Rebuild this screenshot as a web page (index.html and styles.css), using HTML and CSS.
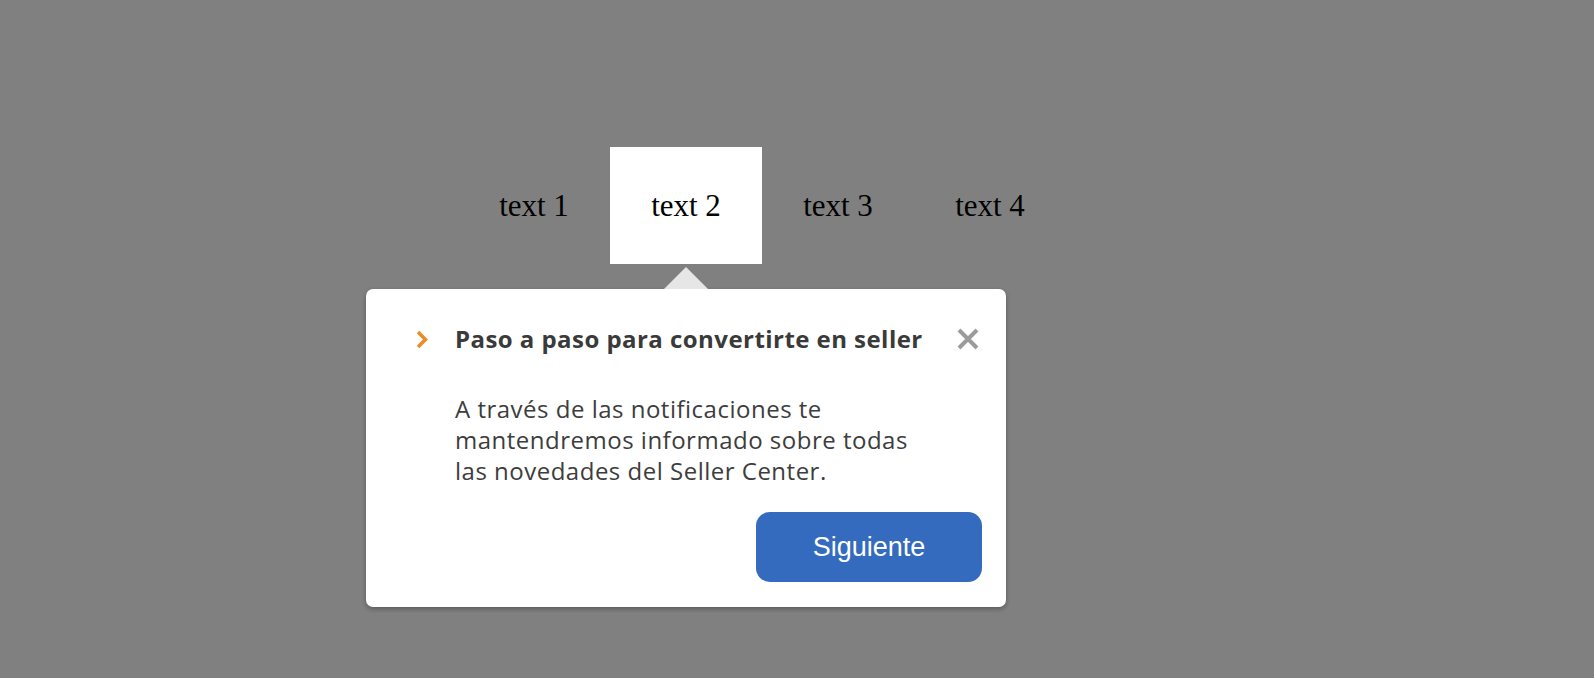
FILE: index.html
```html
<!DOCTYPE html>
<html lang="es">
<head>
<meta charset="utf-8">
<title>Tour</title>
<link rel="stylesheet" href="styles.css">
</head>
<body>
<div class="page">
  <nav class="tabs">
    <div class="tab">text 1</div>
    <div class="tab active">text 2
      <div class="popover">
        <div class="pop-header">
          <svg class="chev" width="12" height="19" viewBox="0 0 12 19" aria-hidden="true">
            <polyline points="2,2 9.5,9.5 2,17" fill="none" stroke="#f08a24" stroke-width="3.5"/>
          </svg>
          <div class="pop-title">Paso a paso para convertirte en seller</div>
          <svg class="close" width="22" height="22" viewBox="0 0 22 22" aria-hidden="true">
            <path d="M2 2 L20 20 M20 2 L2 20" stroke="#9b9b9b" stroke-width="4" fill="none"/>
          </svg>
        </div>
        <p class="pop-body">A través de las notificaciones te mantendremos informado sobre todas las novedades del Seller Center.</p>
        <div class="pop-footer">
          <button class="btn">Siguiente</button>
        </div>
      </div>
    </div>
    <div class="tab">text 3</div>
    <div class="tab">text 4</div>
  </nav>
</div>
</body>
</html>
```
FILE: styles.css
```css
html, body {
  margin: 0;
  padding: 0;
  height: 100%;
}
body {
  background: #808080;
  font-family: "Liberation Serif", "Times New Roman", serif;
}
.page {
  padding: 147px 0 0 458px;
}
.tabs {
  display: flex;
}
.tab {
  position: relative;
  width: 152px;
  height: 117px;
  display: flex;
  align-items: center;
  justify-content: center;
  font-size: 31px;
  color: #000;
}
.tab.active {
  background: #fff;
}
.popover {
  position: absolute;
  top: 100%;
  left: 50%;
  margin-top: 25px;
  transform: translateX(-50%);
  width: 640px;
  box-sizing: border-box;
  padding: 35px 24px 25px 50px;
  background: #fff;
  border-radius: 7px;
  box-shadow: 0 2px 5px rgba(0, 0, 0, 0.3);
  font-family: "Open Sans", "Noto Sans", sans-serif;
  text-align: left;
}
.popover::before {
  content: "";
  position: absolute;
  top: -22px;
  left: 50%;
  margin-left: -22px;
  border-left: 22px solid transparent;
  border-right: 22px solid transparent;
  border-bottom: 22px solid #e6e6e6;
}
.pop-header {
  display: flex;
  align-items: center;
  height: 30px;
}
.chev {
  flex: none;
  margin-right: 27px;
}
.pop-title {
  flex: 1;
  font-size: 24px;
  line-height: 30px;
  letter-spacing: 0.45px;
  font-weight: 700;
  color: #3a3a3a;
  white-space: nowrap;
}
.close {
  flex: none;
  margin-right: 3px;
}
.pop-body {
  margin: 39px 0 0 39px;
  width: 470px;
  font-size: 24px;
  line-height: 31px;
  letter-spacing: 0.5px;
  color: #3d3d3d;
}
.pop-footer {
  display: flex;
  justify-content: flex-end;
  margin-top: 26px;
}
.btn {
  width: 226px;
  height: 70px;
  border: none;
  border-radius: 14px;
  background: #346bbf;
  color: #fff;
  font-family: "Liberation Sans", Arial, sans-serif;
  font-size: 27px;
  padding: 0;
}
```
